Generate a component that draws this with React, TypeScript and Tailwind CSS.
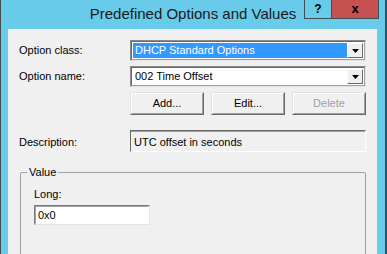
import React from "react";

const font = { fontFamily: '"Liberation Sans", Arial, sans-serif' };

function Combo({ text, selected }: { text: string; selected?: boolean }) {
  return (
    <div className="flex h-[21px] w-[236px] border border-t-[#8a8a8a] border-l-[#8a8a8a] border-b-[#e3e3e3] border-r-[#e3e3e3] bg-white">
      <div className="flex flex-1 border border-t-[#696969] border-l-[#696969] border-b-[#a0a0a0] border-r-[#a0a0a0] p-px">
        <div
          className={
            "flex flex-1 items-center pl-[2px] text-[11px] leading-none " +
            (selected ? "bg-[#3399ff] text-white" : "text-black")
          }
        >
          {text}
        </div>
        <div className="flex w-[16px] items-center justify-center border border-t-white border-l-white border-b-[#696969] border-r-[#696969] bg-[#f0f0f0]">
          <svg width="7" height="4" viewBox="0 0 7 4">
            <path d="M0 0h7L3.5 4z" fill="#000" />
          </svg>
        </div>
      </div>
    </div>
  );
}

function Btn({ label, disabled }: { label: string; disabled?: boolean }) {
  return (
    <div className="flex h-[23px] w-[74px] border border-t-[#e3e3e3] border-l-[#e3e3e3] border-b-[#696969] border-r-[#696969]">
      <div
        className={
          "flex flex-1 items-center justify-center border border-t-white border-l-white border-b-[#a0a0a0] border-r-[#a0a0a0] bg-[#f0f0f0] text-[11px] " +
          (disabled ? "text-[#a0a0a0]" : "text-black")
        }
      >
        {label}
      </div>
    </div>
  );
}

export default function App() {
  return (
    <div
      className="flex h-[254px] w-[387px] flex-col overflow-hidden border-l border-r-2 border-[#3f4c52] bg-[#68cbea]"
      style={font}
    >
      <div className="relative h-[29px] shrink-0">
        <div className="pt-[5px] text-center text-[15px] leading-[18px] text-[#1a1a1a]">
          Predefined Options and Values
        </div>
        <div className="absolute right-[6px] top-0 flex h-[19px]">
          <div className="flex w-[28px] items-center justify-center border border-t-0 border-[#3d5058] bg-[#68cbea] text-[12px] font-bold text-black">
            ?
          </div>
          <div className="flex w-[47px] items-center justify-center border border-l-0 border-t-0 border-[#3d5058] bg-[#c75050] text-[13px] font-bold text-black">
            x
          </div>
        </div>
      </div>

      <div className="ml-[7px] mr-[8px] flex-1 bg-[#f0f0f0] text-[11px] text-black">
        <div className="flex items-center pl-[11px] pt-[11px]">
          <div className="w-[111px]">Option class:</div>
          <Combo text="DHCP Standard Options" selected />
        </div>
        <div className="mt-[5px] flex items-center pl-[11px]">
          <div className="w-[111px]">Option name:</div>
          <Combo text="002 Time Offset" />
        </div>
        <div className="mt-[5px] flex gap-[7px] pl-[122px]">
          <Btn label="Add..." />
          <Btn label="Edit..." />
          <Btn label="Delete" disabled />
        </div>

        <div className="mt-[15px] flex items-center pl-[11px]">
          <div className="w-[111px] pt-[2px]">Description:</div>
          <div className="h-[22px] w-[236px] border border-t-[#696969] border-l-[#696969] border-b-white border-r-white">
            <div className="h-full border-t border-[#a0a0a0] pl-[3px] pt-[2px]">UTC offset in seconds</div>
          </div>
        </div>

        <div className="relative ml-[12px] mt-[20px] h-[120px] w-[346px] rounded-[2px] border border-[#a0a0a0]">
          <div className="absolute -top-[8px] left-[6px] bg-[#f0f0f0] px-[2px] text-[11px] leading-[14px]">
            Value
          </div>
          <div className="pl-[13px] pt-[15px]">
            <div className="leading-[13px]">Long:</div>
            <div className="mt-[4px] h-[20px] w-[116px] border border-t-[#7a7a7a] border-l-[#7a7a7a] border-b-[#e3e3e3] border-r-[#e3e3e3] bg-white">
              <div className="h-full border border-t-[#a0a0a0] border-l-[#a0a0a0] border-b-white border-r-white pl-[2px] leading-[16px]">
                0x0
              </div>
            </div>
          </div>
        </div>
      </div>
    </div>
  );
}
